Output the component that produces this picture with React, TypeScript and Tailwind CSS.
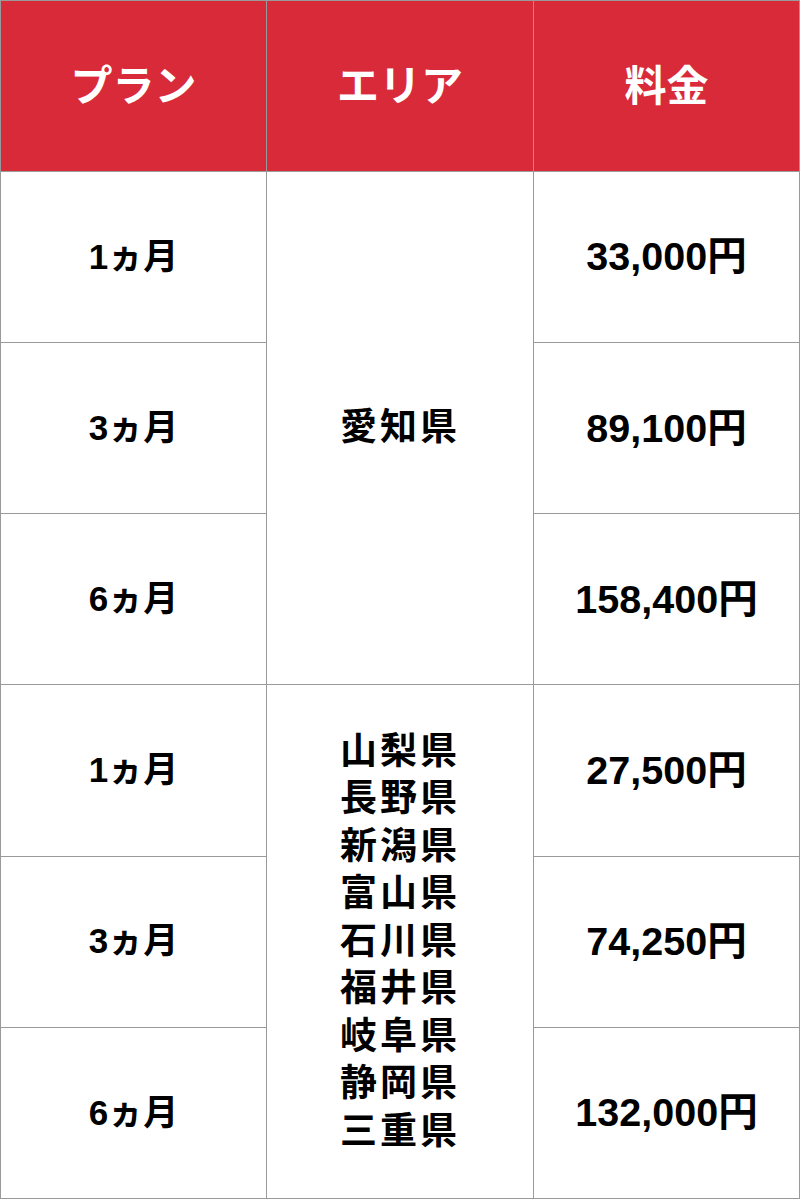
const rows = [
  { plan: '1ヵ月', price: '33,000円' },
  { plan: '3ヵ月', price: '89,100円' },
  { plan: '6ヵ月', price: '158,400円' },
  { plan: '1ヵ月', price: '27,500円' },
  { plan: '3ヵ月', price: '74,250円' },
  { plan: '6ヵ月', price: '132,000円' },
]

const areas = ['山梨県', '長野県', '新潟県', '富山県', '石川県', '福井県', '岐阜県', '静岡県', '三重県']

const cell = 'border border-[#9a9a9a] text-center align-middle'

export default function App() {
  return (
    <div className="w-[800px] h-[1199px] bg-white font-['Liberation_Sans','Noto_Sans_CJK_JP',sans-serif] text-black">
      <table className="w-full h-full border-collapse table-fixed">
        <thead>
          <tr className="h-[171px] bg-[#d92a3a] text-white text-[42px] font-bold">
            <th className={cell + ' w-[266px]'}>プラン</th>
            <th className={cell + ' w-[267px]'}>エリア</th>
            <th className={cell}>料金</th>
          </tr>
        </thead>
        <tbody className="text-[35px] font-bold">
          {rows.map((r, i) => (
            <tr key={i} className="h-[171px]">
              <td className={cell}>{r.plan}</td>
              {i === 0 && (
                <td rowSpan={3} className={cell + ' text-[37px] tracking-[0.08em]'}>愛知県</td>
              )}
              {i === 3 && (
                <td rowSpan={3} className={cell + ' text-[37px] tracking-[0.08em] leading-[47.5px]'}>
                  {areas.map(a => (
                    <div key={a}>{a}</div>
                  ))}
                </td>
              )}
              <td className={cell + ' text-[39.5px]'}>{r.price}</td>
            </tr>
          ))}
        </tbody>
      </table>
    </div>
  )
}
